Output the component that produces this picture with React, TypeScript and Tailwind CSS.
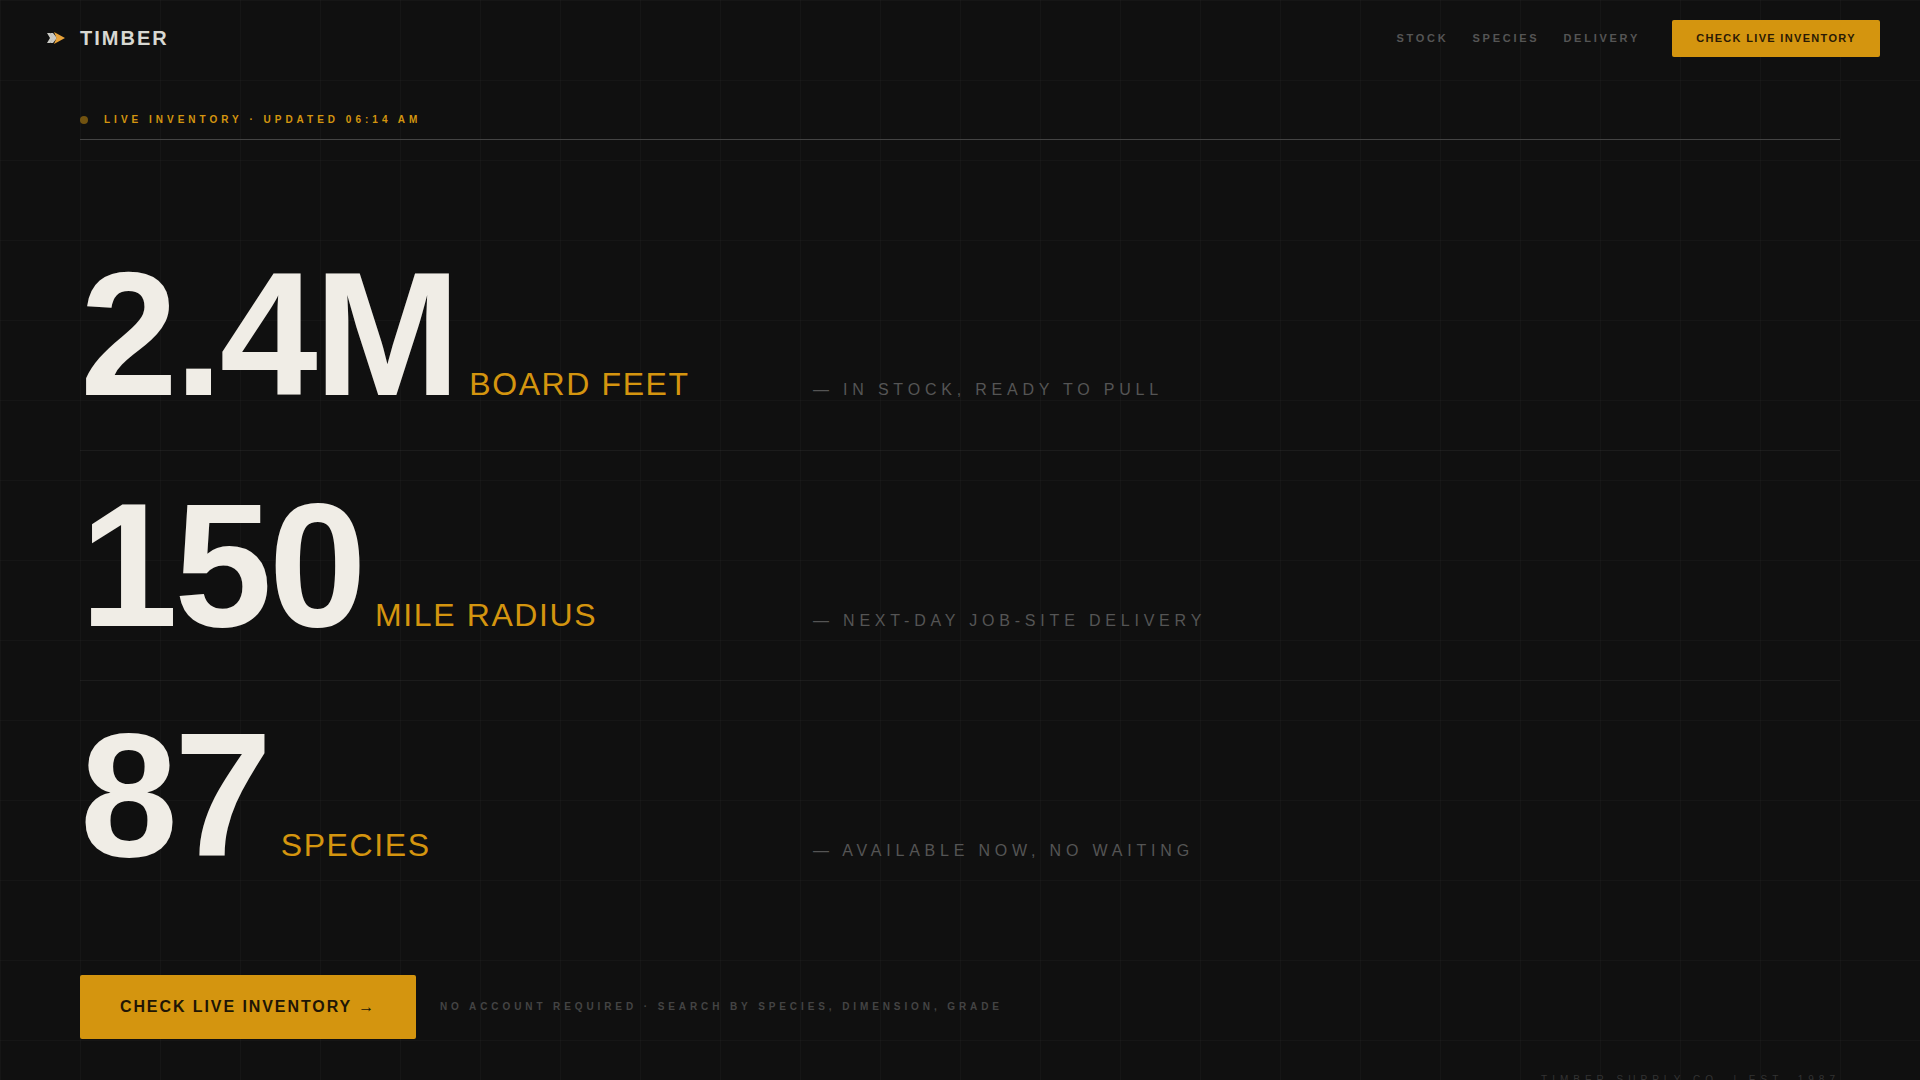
export default function App() {
  const rows = [
    { n: "2.4M", l: "BOARD FEET", d: "— IN STOCK, READY TO PULL" },
    { n: "150", l: "MILE RADIUS", d: "— NEXT-DAY JOB-SITE DELIVERY" },
    { n: "87", l: "SPECIES", d: "— AVAILABLE NOW, NO WAITING" },
  ];
  return (
    <div className="h-screen overflow-hidden bg-[#101010] bg-[linear-gradient(rgba(255,255,255,0.025)_1px,transparent_1px),linear-gradient(90deg,rgba(255,255,255,0.025)_1px,transparent_1px)] bg-[size:80px_80px] font-['Liberation_Sans',Arial,sans-serif] flex flex-col">
      <header className="flex items-center justify-between h-[77px] pl-[47px] pr-10 shrink-0">
        <div className="flex items-center gap-[15px] pb-[2px]">
          <svg width="18" height="14" viewBox="0 0 18 14">
            <path d="M0 2 L3 2 L7 7 L3 12 L0 12 L3 7 Z" fill="#c9c9c4" />
            <path d="M3 2 L6 2 L10 7 L6 12 L3 12 L6 7 Z" fill="#c9c9c4" />
            <path d="M7 1 L18 7 L7 13 L9.5 7 Z" fill="#e8a33a" />
          </svg>
          <span className="text-[20px] font-bold tracking-[0.1em] text-[#d8d8d2]">TIMBER</span>
        </div>
        <nav className="flex items-center">
          <a className="text-[11px] font-bold tracking-[0.25em] text-[#555]">STOCK</a>
          <a className="ml-[24px] text-[11px] font-bold tracking-[0.25em] text-[#555]">SPECIES</a>
          <a className="ml-[24px] text-[11px] font-bold tracking-[0.25em] text-[#555]">DELIVERY</a>
          <a className="ml-[32px] w-[208px] h-[37px] flex items-center justify-center bg-[#d4950f] rounded-[2px] text-[11px] font-bold tracking-[0.12em] text-[#2a1a05]">CHECK LIVE INVENTORY</a>
        </nav>
      </header>
      <main className="px-20 flex flex-col">
        <div className="flex items-end gap-4 h-[63px] pb-[13.5px] border-b border-[#444]">
          <span className="w-2 h-2 rounded-full bg-[#d4950f] opacity-50 mb-[2px]" />
          <span className="text-[10px] leading-[12px] font-bold tracking-[0.4em] text-[#d4950f]">LIVE INVENTORY · UPDATED 06:14 AM</span>
        </div>
        <div className="mt-[80px]">
          {rows.map((r, i) => (
            <div key={r.n} className={`grid grid-cols-[733px_1fr] items-baseline h-[230.5px] pt-[26px] ${i < 2 ? "border-b border-[rgba(255,255,255,0.05)]" : ""}`}>
              <div className="flex items-baseline gap-3">
                <span className="text-[176px] leading-none font-bold tracking-[-0.02em] text-[#f0ede6]">{r.n}</span>
                <span className="text-[32px] tracking-[0.05em] text-[#d4950f]">{r.l}</span>
              </div>
              <span className="text-[16px] tracking-[0.3em] text-[#555]">{r.d}</span>
            </div>
          ))}
        </div>
        <div className="flex items-center gap-6 mt-[63px]">
          <a className="w-[336px] h-16 flex items-center justify-center gap-[6px] bg-[#d4950f] rounded-[2px] text-[16px] font-bold tracking-[0.12em] text-[#201505]">
            CHECK LIVE INVENTORY <span>→</span>
          </a>
          <span className="text-[10px] leading-[16px] pt-px font-bold tracking-[0.39em] text-[#444]">NO ACCOUNT REQUIRED · SEARCH BY SPECIES, DIMENSION, GRADE</span>
        </div>
        <div className="mt-[33px] text-right text-[10px] tracking-[0.5em] text-[#333]">TIMBER SUPPLY CO. | EST. 1987</div>
      </main>
    </div>
  );
}
